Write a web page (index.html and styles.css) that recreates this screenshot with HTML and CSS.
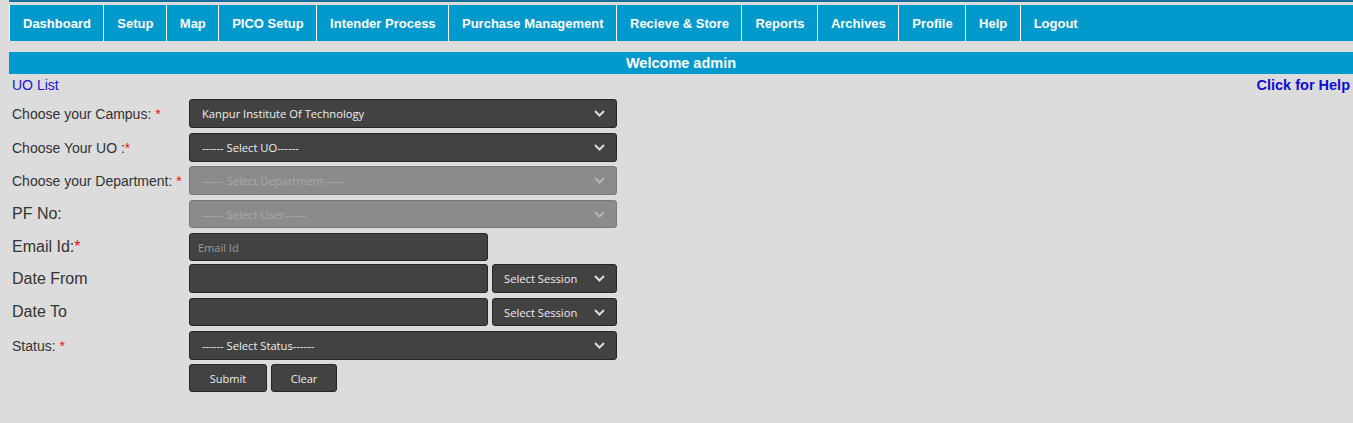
FILE: index.html
```html
<!DOCTYPE html>
<html>
<head>
<meta charset="utf-8">
<title>UO List</title>
<link rel="stylesheet" href="styles.css">
</head>
<body>
<div class="page">
  <div class="topstrip"></div>
  <nav class="nav">
    <a class="nav-item">Dashboard</a>
    <a class="nav-item">Setup</a>
    <a class="nav-item">Map</a>
    <a class="nav-item">PICO Setup</a>
    <a class="nav-item">Intender Process</a>
    <a class="nav-item">Purchase Management</a>
    <a class="nav-item">Recieve &amp; Store</a>
    <a class="nav-item">Reports</a>
    <a class="nav-item">Archives</a>
    <a class="nav-item">Profile</a>
    <a class="nav-item">Help</a>
    <a class="nav-item last">Logout</a>
  </nav>
  <div class="welcome">Welcome admin</div>
  <div class="subbar">
    <a class="uolist">UO List</a>
    <a class="help">Click for Help</a>
  </div>
  <div class="form">
    <label class="lbl"><span>Choose your Campus:</span><span class="req gap">*</span></label>
    <div class="sel">
      <span class="sel-text">Kanpur Institute Of Technology</span>
      <svg class="chev" width="11" height="7" viewBox="0 0 11 7"><path d="M1 1 L5.5 5.5 L10 1" fill="none" stroke="#dcdcdc" stroke-width="2"/></svg>
    </div>

    <label class="lbl"><span>Choose Your UO :</span><span class="req">*</span></label>
    <div class="sel">
      <span class="sel-text">------ Select UO------</span>
      <svg class="chev" width="11" height="7" viewBox="0 0 11 7"><path d="M1 1 L5.5 5.5 L10 1" fill="none" stroke="#dcdcdc" stroke-width="2"/></svg>
    </div>

    <label class="lbl"><span>Choose your Department:</span><span class="req gap">*</span></label>
    <div class="sel disabled">
      <span class="sel-text">------ Select Department------</span>
      <svg class="chev" width="11" height="7" viewBox="0 0 11 7"><path d="M1 1 L5.5 5.5 L10 1" fill="none" stroke="#b4b4b4" stroke-width="2"/></svg>
    </div>

    <label class="lbl big h28"><span>PF No:</span></label>
    <div class="sel disabled h28">
      <span class="sel-text">------ Select User------</span>
      <svg class="chev" width="11" height="7" viewBox="0 0 11 7"><path d="M1 1 L5.5 5.5 L10 1" fill="none" stroke="#b4b4b4" stroke-width="2"/></svg>
    </div>

    <label class="lbl big h28"><span>Email Id:</span><span class="req">*</span></label>
    <div class="line">
      <div class="inp wide h28"><span class="ph">Email Id</span></div>
    </div>

    <label class="lbl big"><span>Date From</span></label>
    <div class="line">
      <div class="inp wide"></div>
      <div class="sel session">
        <span class="sel-text">Select Session</span>
        <svg class="chev" width="11" height="7" viewBox="0 0 11 7"><path d="M1 1 L5.5 5.5 L10 1" fill="none" stroke="#dcdcdc" stroke-width="2"/></svg>
      </div>
    </div>

    <label class="lbl big h28"><span>Date To</span></label>
    <div class="line">
      <div class="inp wide h28"></div>
      <div class="sel session h28">
        <span class="sel-text">Select Session</span>
        <svg class="chev" width="11" height="7" viewBox="0 0 11 7"><path d="M1 1 L5.5 5.5 L10 1" fill="none" stroke="#dcdcdc" stroke-width="2"/></svg>
      </div>
    </div>

    <label class="lbl"><span>Status:</span><span class="req gap">*</span></label>
    <div class="sel">
      <span class="sel-text">------ Select Status------</span>
      <svg class="chev" width="11" height="7" viewBox="0 0 11 7"><path d="M1 1 L5.5 5.5 L10 1" fill="none" stroke="#dcdcdc" stroke-width="2"/></svg>
    </div>

    <span class="lbl"></span>
    <div class="line">
      <button class="btn submit">Submit</button>
      <button class="btn clear">Clear</button>
    </div>
  </div>
</div>
</body>
</html>
```

FILE: styles.css
```css
html, body {
  margin: 0;
  padding: 0;
  background: #dcdcdc;
}
body {
  font-family: "Liberation Sans", Arial, sans-serif;
  width: 1353px;
  height: 423px;
  overflow: hidden;
}
.page {
  padding-left: 9px;
}
.topstrip {
  height: 2px;
  background: #1b6d9c;
}
.nav {
  margin-top: 3px;
  height: 36px;
  background: #0099cc;
  display: flex;
  border-left: 1px solid #ffffff;
}
.nav-item {
  display: flex;
  align-items: center;
  padding: 0 12.4px 0 13px;
  color: #ffffff;
  font-weight: bold;
  font-size: 13px;
  border-right: 1px solid #ffffff;
  white-space: nowrap;
}
.nav-item.last {
  border-right: none;
}
.welcome {
  margin-top: 11px;
  height: 22px;
  background: #0099cc;
  color: #ffffff;
  font-weight: bold;
  font-size: 14.5px;
  text-align: center;
  line-height: 22px;
}
.subbar {
  display: flex;
  justify-content: space-between;
  padding: 3px 3px 0 3px;
  height: 19px;
  font-size: 14px;
  line-height: 17px;
}
.uolist {
  color: #1a14d8;
}
.help {
  color: #0c0cd0;
  font-weight: bold;
  font-size: 14.5px;
}
.form {
  display: grid;
  grid-template-columns: 177px 428px;
  grid-template-rows: 34px 33px 34px 33px 31px 34px 33px 33px 28px;
  align-items: start;
  padding-left: 3px;
  margin-top: 3px;
}
.lbl {
  display: flex;
  align-items: center;
  height: 29px;
  font-size: 14px;
  color: #333333;
  white-space: nowrap;
}
.lbl.big {
  font-size: 16px;
}
.req {
  color: #ee1111;
}
.req.gap {
  margin-left: 4px;
}
.sel {
  position: relative;
  box-sizing: border-box;
  height: 29px;
  background: #424242;
  border: 1px solid #262626;
  border-radius: 3px;
  display: flex;
  align-items: center;
  padding-left: 12px;
  font-family: "Open Sans", "DejaVu Sans", sans-serif;
  font-size: 11.2px;
  color: #eeeeee;
}
.sel.disabled {
  background: #8b8b8b;
  border-color: #7a7a7a;
  color: #aaaaaa;
}
.chev {
  position: absolute;
  right: 11px;
  top: 10px;
}
.line {
  display: flex;
  gap: 4px;
}
.inp {
  box-sizing: border-box;
  height: 29px;
  background: #424242;
  border: 1px solid #262626;
  border-radius: 3px;
  display: flex;
  align-items: center;
  padding-left: 8px;
  font-family: "Open Sans", "DejaVu Sans", sans-serif;
  font-size: 11px;
}
.inp.wide {
  width: 299px;
}
.h28 {
  height: 28px;
}
.ph {
  color: #9a9a9a;
}
.sel.session {
  width: 125px;
  padding-left: 11px;
}
.btn {
  box-sizing: border-box;
  height: 28px;
  background: #424242;
  border: 1px solid #262626;
  border-radius: 3px;
  color: #eeeeee;
  font-family: "Open Sans", "DejaVu Sans", sans-serif;
  font-size: 11px;
  padding: 0;
}
.btn.submit {
  width: 78px;
}
.btn.clear {
  width: 66px;
}
```
